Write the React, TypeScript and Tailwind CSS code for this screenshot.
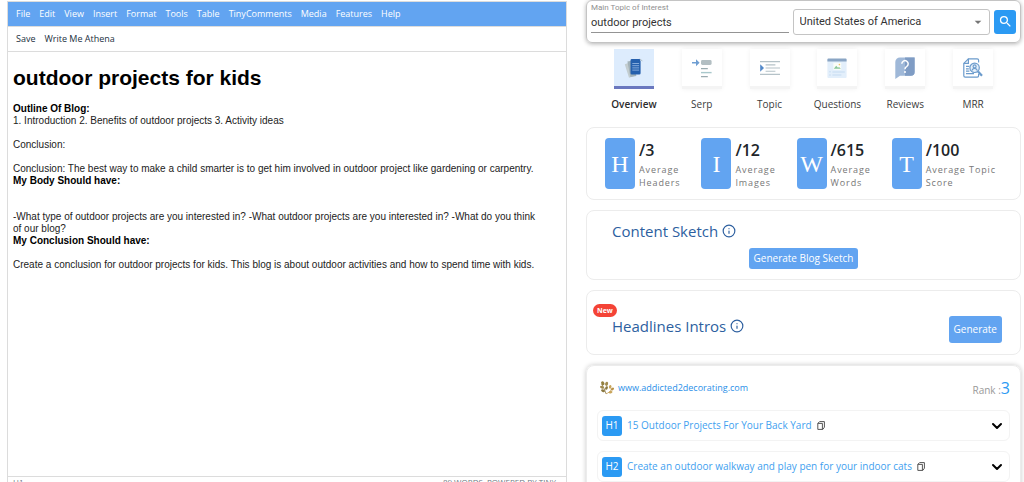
import type { ReactNode } from 'react';
import { ChevronDown, Info } from 'lucide-react';
import { MdArrowDropDown, MdSearch } from 'react-icons/md';

const menuItems = [
    'File',
    'Edit',
    'View',
    'Insert',
    'Format',
    'Tools',
    'Table',
    'TinyComments',
    'Media',
    'Features',
    'Help',
];

const stats = [
    { letter: 'H', value: '/3', lines: ['Average', 'Headers'] },
    { letter: 'I', value: '/12', lines: ['Average', 'Images'] },
    { letter: 'W', value: '/615', lines: ['Average', 'Words'] },
    { letter: 'T', value: '/100', lines: ['Average Topic', 'Score'] },
];

const headings = [
    { tag: 'H1', text: '15 Outdoor Projects For Your Back Yard' },
    { tag: 'H2', text: 'Create an outdoor walkway and play pen for your indoor cats' },
];

const OverviewIcon = () => (
    <svg viewBox="0 0 20 20" className="size-5">
        <path d="M0.8 6.2 5.6 4.4 10.6 18 5 19.8Z" fill="#c3cdd0" />
        <path d="M3.4 3.6 9 2.6 12.4 18 6.4 19Z" fill="#a3b2b8" />
        <path d="M7.5 1h8.2L16.6 3.2V15.2a1.4 1.4 0 0 1-1.4 1.4H7.9a1.4 1.4 0 0 1-1.4-1.4V2.4A1.4 1.4 0 0 1 7.5 1Z" fill="#2560ad" />
        <path d="M8.3 5.5h6.8M8.3 7.7h6.8M8.3 9.9h6.8M8.3 12.1h6.8" stroke="#8fb2e0" strokeWidth="0.9" />
        <path d="m16 0.8 2.4 2.4" stroke="#a3b2b8" strokeWidth="0.9" />
    </svg>
);

const SerpIcon = () => (
    <svg viewBox="0 0 20 20" className="size-5">
        <path d="M0 4h4V1.2L7.6 4.8 4 8.2V5.6H0Z" fill="#6f9ed2" />
        <rect x="9" y="2" width="10.6" height="5" rx="1.4" fill="#b3bfc3" />
        <path d="M9 10.6h6.8M9 18.6h6.8" stroke="#9aabb0" strokeWidth="1.4" />
        <path d="M9 14.6h10.6" stroke="#a9c8cc" strokeWidth="1.4" />
    </svg>
);

const TopicIcon = () => (
    <svg viewBox="0 0 20 20" className="size-5">
        <path d="M0 3.6h20M5.6 6.9h9.8M5.6 10h14.4M5.6 13.2h9.8M0 16.4h20" stroke="#b5c2c8" strokeWidth="1.1" />
        <path d="M0.2 6.2 4 10 0.2 13.8Z" fill="#5389c9" />
    </svg>
);

const QuestionsIcon = () => (
    <svg viewBox="0 0 20 20" className="size-5">
        <rect x="0.4" y="1" width="19.2" height="19" rx="1" fill="#e3effb" />
        <path d="M0.4 3.4V1.6a1 1 0 0 1 1-1h17.2a1 1 0 0 1 1 1v1.8Z" fill="#8aa5c4" />
        <rect x="6.4" y="4.8" width="7.8" height="7" fill="#fbfdf8" />
        <path d="m6.8 10.8 2.4-3 1.8 2 1-.9 1.9 1.9Z" fill="#8ac79a" />
        <circle cx="12.4" cy="6.6" r="0.8" fill="#f2c46b" />
        <path d="M2.2 13.8h1.6M2.2 17h1.6M5.4 14h12.4M5.4 17h9" stroke="#c5dbf1" strokeWidth="1" />
    </svg>
);

const ReviewsIcon = () => (
    <svg viewBox="0 0 20 22" className="h-[22px] w-5">
        <path d="M5 0.4H19.6V15a3.8 3.8 0 0 1-3.8 3.8H5L0.3 22V5A4.6 4.6 0 0 1 5 0.4Z" fill="#9fb8d8" />
        <path d="M10 0.4h9.6V15a3.8 3.8 0 0 1-3.8 3.8H10Z" fill="#7f9cc4" />
        <path d="M6.8 6.8a3.2 3.2 0 1 1 4.8 2.8c-1.1.6-1.6 1.1-1.6 2.6" fill="none" stroke="#fff" strokeWidth="1.5" />
        <circle cx="10" cy="15" r="1" fill="#fff" />
    </svg>
);

const MrrIcon = () => (
    <svg viewBox="0 0 20 20" className="size-5" fill="none" stroke="#6b9bcc" strokeWidth="1.2">
        <path d="M15.6 4.4V2.2a1.4 1.4 0 0 0-1.4-1.4H5.4L0.8 5.4V17.8a1.4 1.4 0 0 0 1.4 1.4h12a1.4 1.4 0 0 0 1.4-1.4V16" />
        <path d="M5.4 0.8v4.6H0.8M3 8.4h3.4M3 10.8h2.8M3 13.2h3.4M3 15.6h8" />
        <circle cx="11.6" cy="9.8" r="4.7" fill="#e6f0fa" />
        <circle cx="11.6" cy="8.4" r="1.5" />
        <path d="M8.8 12.6c.5-1.6 1.5-2.2 2.8-2.2s2.3.6 2.8 2.2" />
        <path d="m15 13.4 4 4.4" strokeWidth="2.2" />
    </svg>
);

const LeafIcon = () => (
    <svg viewBox="0 0 14 14" className="size-3.5">
        <path d="M6 12.8C5 9.4 3.6 6 1.6 3" stroke="#8a7340" strokeWidth="0.8" fill="none" />
        <ellipse cx="2.8" cy="2.2" rx="1.5" ry="2" fill="#93803f" transform="rotate(-30 2.8 2.2)" />
        <ellipse cx="6.6" cy="2.8" rx="1.5" ry="2.1" fill="#a08a4e" transform="rotate(15 6.6 2.8)" />
        <ellipse cx="2" cy="6.3" rx="1.3" ry="2" fill="#a08a4e" transform="rotate(-70 2 6.3)" />
        <ellipse cx="6.5" cy="7" rx="1.3" ry="1.9" fill="#8a7840" transform="rotate(25 6.5 7)" />
        <ellipse cx="3" cy="9.8" rx="1.3" ry="2" fill="#8a7840" transform="rotate(-70 3 9.8)" />
        <path d="M6 12.8c2.2-.8 4.4-2.2 6-5" stroke="#c29a4a" strokeWidth="0.8" fill="none" />
        <ellipse cx="10.2" cy="5.8" rx="1.3" ry="1.9" fill="#c9a55b" transform="rotate(10 10.2 5.8)" />
        <ellipse cx="12.4" cy="8" rx="1.2" ry="1.8" fill="#b8924a" transform="rotate(55 12.4 8)" />
        <ellipse cx="10.6" cy="11.2" rx="1.2" ry="1.9" fill="#c9a55b" transform="rotate(80 10.6 11.2)" />
    </svg>
);

const CopyIcon = () => (
    <svg viewBox="0 0 8 9" className="h-[9px] w-2" fill="none" stroke="#555" strokeWidth="1" strokeLinejoin="round">
        <path d="M2.6 0.6h4.8v5.6L5.8 8.4H0.8V2.4Z" />
        <path d="M0.8 2.4h4.6v6" />
    </svg>
);

const tabs: { label: string; icon: ReactNode }[] = [
    { label: 'Overview', icon: <OverviewIcon /> },
    { label: 'Serp', icon: <SerpIcon /> },
    { label: 'Topic', icon: <TopicIcon /> },
    { label: 'Questions', icon: <QuestionsIcon /> },
    { label: 'Reviews', icon: <ReviewsIcon /> },
    { label: 'MRR', icon: <MrrIcon /> },
];

const Editor = () => (
    <section className="mt-px flex min-w-0 flex-col border border-[#dcdcdc]">
        <nav className="flex h-[25px] items-center gap-[9px] border-b border-[#dcdcdc] bg-[#62a4f1] px-2 text-[9px] text-white">
            {menuItems.map((item) => (
                <button key={item} type="button">
                    {item}
                </button>
            ))}
        </nav>
        <div className="flex h-[25px] items-center gap-[9px] border-b border-[#dcdcdc] px-2 text-[9px] text-[#222f3e]">
            <button type="button">Save</button>
            <button type="button">Write Me Athena</button>
        </div>

        <article className="min-h-[424px] pt-[14px] pr-6 pl-[5px] font-['Liberation_Sans',Arial,sans-serif] text-[10px] leading-[12px] text-[#222]">
            <h1 className="mb-[13px] text-[21px] leading-6 font-bold text-black">outdoor projects for kids</h1>
            <h2 className="font-bold text-black">Outline Of Blog:</h2>
            <p className="mb-3">1. Introduction 2. Benefits of outdoor projects 3. Activity ideas</p>
            <p className="mb-3">Conclusion:</p>
            <p>
                Conclusion: The best way to make a child smarter is to get him involved in outdoor project like
                gardening or carpentry.
            </p>
            <h2 className="mb-6 font-bold text-black">My Body Should have:</h2>
            <p>
                -What type of outdoor projects are you interested in? -What outdoor projects are you interested in?
                -What do you think of our blog?
            </p>
            <h2 className="mb-3 font-bold text-black">My Conclusion Should have:</h2>
            <p>
                Create a conclusion for outdoor projects for kids. This blog is about outdoor activities and how to
                spend time with kids.
            </p>
        </article>

        <footer className="flex justify-between border-t border-[#dcdcdc] pr-[10px] pl-[5px] text-[8px] leading-[10px] text-[#222f3e]/70">
            <span>H1</span>
            <span>89 WORDS&nbsp; POWERED BY TINY</span>
        </footer>
    </section>
);

const SearchBar = () => (
    <form className="flex h-[43px] items-center gap-1 rounded-md border border-[#c4c4c4] px-1 font-[Roboto,sans-serif] shadow-[0_1px_4px_rgba(0,0,0,0.3)]">
        <div className="min-w-0 flex-1 self-start pt-[2px]">
            <label htmlFor="topic" className="block text-[8px] leading-[10px] text-[#8f8f8f]">
                Main Topic of Interest
            </label>
            <input
                id="topic"
                defaultValue="outdoor projects"
                className="block h-5 w-full border-b border-[#949494] text-[11px] text-[#333] outline-none"
            />
        </div>
        <div className="relative min-w-0 flex-1">
            <select
                aria-label="Country"
                className="h-[26px] w-full appearance-none rounded-[3px] border border-[#c4c4c4] px-[6px] text-[11px] text-[#333]"
            >
                <option>United States of America</option>
            </select>
            <MdArrowDropDown className="pointer-events-none absolute top-[6px] right-1 size-4 text-[#757575]" />
        </div>
        <button
            type="submit"
            aria-label="Search"
            className="flex h-6 w-[22px] items-center justify-center rounded-[3px] bg-[#2b9af3] text-white"
        >
            <MdSearch className="size-[15px]" />
        </button>
    </form>
);

const Tabs = () => (
    <div className="grid grid-cols-6 px-[14px] pt-[6px]">
        {tabs.map((tab, index) => (
            <button key={tab.label} type="button" className="flex flex-col items-center gap-[7px] text-[10px] text-[#3c3c3c]">
                <span
                    className={
                        index === 0
                            ? 'flex size-10 items-center justify-center border-b-[3px] border-[#6a78bf] bg-[#ddecfd]'
                            : 'flex size-10 items-center justify-center border-b-[3px] border-[#f4f4f4] bg-white shadow-[0_0_5px_rgba(0,0,0,0.06)]'
                    }
                >
                    {tab.icon}
                </span>
                <span className={index === 0 ? 'leading-4 font-semibold text-[#2b2b2b]' : 'leading-4'}>{tab.label}</span>
            </button>
        ))}
    </div>
);

const Stats = () => (
    <section className="mt-[15px] flex h-[73px] items-center justify-between rounded-lg border border-[#ececec] pr-6 pl-[18px]">
        {stats.map((stat) => (
            <div key={stat.letter} className="flex gap-1">
                <span className="flex h-[51px] w-[30px] items-center justify-center rounded bg-[#62a4f1] font-['Liberation_Serif',serif] text-[24px] text-white">
                    {stat.letter}
                </span>
                <div>
                    <p className="text-[16px] leading-[25px] font-semibold text-[#212529]">{stat.value}</p>
                    {stat.lines.map((line) => (
                        <p key={line} className="text-[9px] leading-[13px] tracking-widest text-[#777]">
                            {line}
                        </p>
                    ))}
                </div>
            </div>
        ))}
    </section>
);

const CardTitle = ({ children }: { children: ReactNode }) => (
    <h2 className="flex items-center gap-1 text-[15px] leading-5 font-medium text-[#2d5f9f]">
        {children}
        <Info className="size-[14px]" />
    </h2>
);

const ContentSketch = () => (
    <section className="mt-[10px] flex h-[70px] flex-col gap-[7px] rounded-lg border border-[#ececec] px-[25px] pt-[10px]">
        <CardTitle>Content Sketch</CardTitle>
        <button type="button" className="h-[21px] self-center rounded-[3px] bg-[#62a4f1] px-[5px] text-[10px] text-white">
            Generate Blog Sketch
        </button>
    </section>
);

const HeadlinesIntros = () => (
    <section className="relative mt-[10px] flex h-[65px] items-start justify-between rounded-lg border border-[#ececec] pt-[25px] pr-[18px] pl-[25px]">
        <span className="absolute top-[13px] left-[6px] rounded-full bg-[#f44336] px-1 text-[7px] leading-[13px] font-bold text-white">
            New
        </span>
        <CardTitle>Headlines Intros</CardTitle>
        <button type="button" className="h-[27px] rounded-[3px] bg-[#62a4f1] px-[5px] text-[10px] text-white">
            Generate
        </button>
    </section>
);

const SerpResult = () => (
    <section className="mt-[10px] rounded-lg border border-[#ececec] px-[10px] pt-3 pb-4 shadow-[0_0_5px_rgba(0,0,0,0.22)]">
        <div className="flex h-5 items-center justify-between pl-[3px]">
            <a href="#addicted2decorating" className="flex items-center gap-1 text-[9px] text-[#2b8fe8]">
                <LeafIcon />
                www.addicted2decorating.com
            </a>
            <p className="text-[10px] text-[#999]">
                Rank :<span className="text-[16px] text-[#2b9af3]">3</span>
            </p>
        </div>
        <ul className="mt-3 flex flex-col gap-[10px]">
            {headings.map((heading) => (
                <li key={heading.tag} className="flex h-[31px] items-center rounded-md border border-[#f3f3f3] px-1">
                    <span className="flex size-5 items-center justify-center rounded-[3px] bg-[#2b9af3] text-[10px] text-white">
                        {heading.tag}
                    </span>
                    <span className="ml-[5px] text-[10px] text-[#3f9fef]">{heading.text}</span>
                    <button type="button" aria-label="Copy" className="ml-[5px]">
                        <CopyIcon />
                    </button>
                    <button type="button" aria-label="Expand" className="ml-auto text-black">
                        <ChevronDown className="size-4" strokeWidth={3} />
                    </button>
                </li>
            ))}
        </ul>
    </section>
);

export default function App() {
    return (
        <main className="flex h-screen items-start gap-[19px] overflow-hidden bg-white pr-[3px] pl-[7px] font-['Open_Sans','Noto_Sans',sans-serif]">
            <div className="min-w-0 flex-[560]">
                <Editor />
            </div>
            <div className="min-w-0 flex-[435]">
                <SearchBar />
                <Tabs />
                <Stats />
                <ContentSketch />
                <HeadlinesIntros />
                <SerpResult />
            </div>
        </main>
    );
}
